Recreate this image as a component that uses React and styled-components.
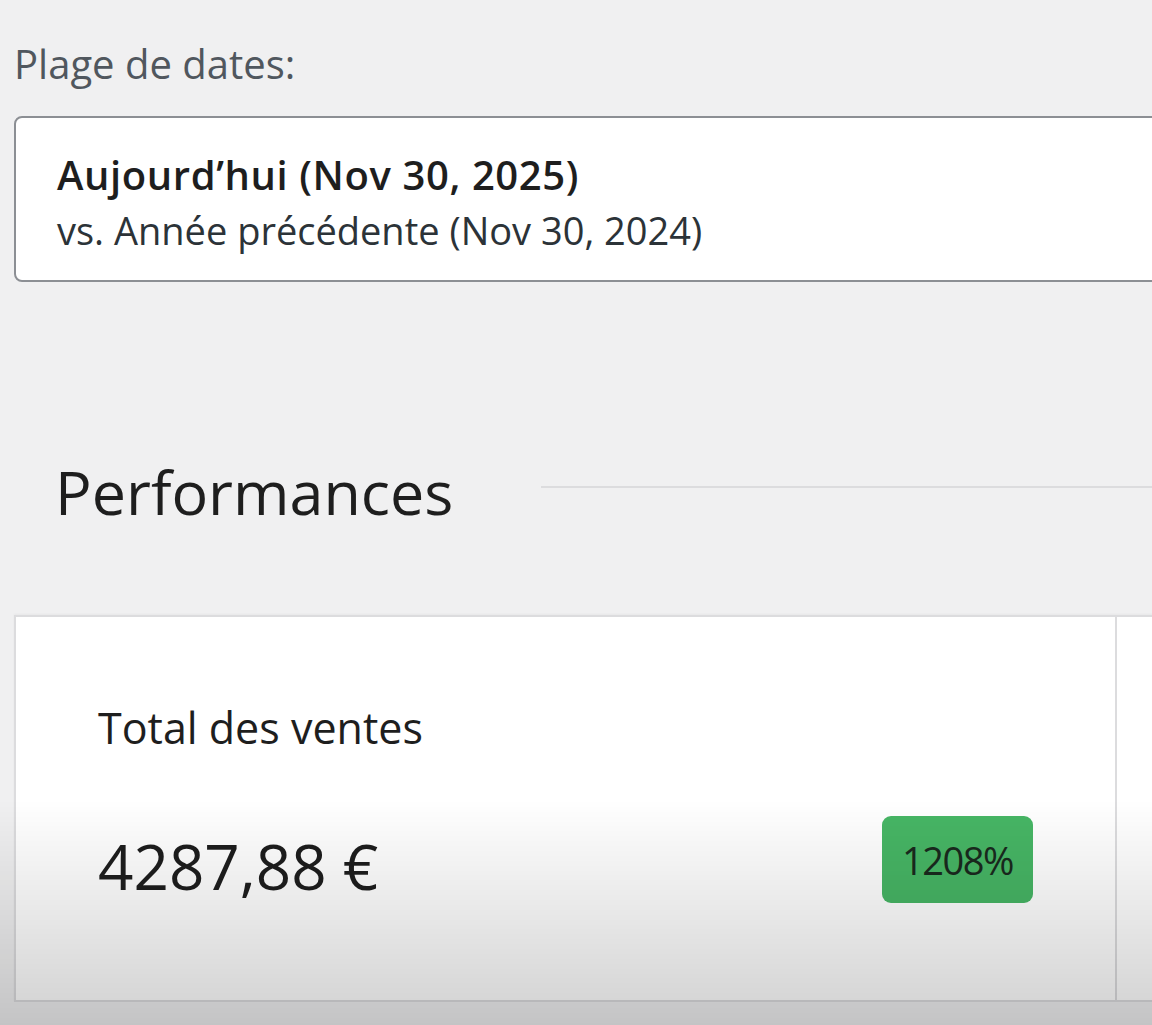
import React from "react";
import styled, { createGlobalStyle } from "styled-components";

const GlobalStyle = createGlobalStyle`
  html, body {
    margin: 0;
    padding: 0;
    background: #f0f0f1;
    overflow: hidden;
  }
  body {
    font-family: "Open Sans", "Noto Sans", sans-serif;
    color: #1e1e1e;
  }
`;

const summary = [
  { id: "sales", label: "Total des ventes", value: "4287,88 €", delta: "1208%" },
];

const App = () => {
  return (
    <>
      <GlobalStyle />
      <Page>
        <Field>
          <FieldLabel>Plage de dates:</FieldLabel>
          <DateButton type="button">
            <DateMain>Aujourd’hui (Nov 30, 2025)</DateMain>
            <DateCompare>vs. Année précédente (Nov 30, 2024)</DateCompare>
          </DateButton>
        </Field>

        <SectionHeader>
          <SectionTitle>Performances</SectionTitle>
          <Rule />
        </SectionHeader>

        <SummaryList>
          {summary.map((item) => (
            <SummaryItem key={item.id}>
              <ItemLabel>{item.label}</ItemLabel>
              <ItemData>
                <ItemValue>{item.value}</ItemValue>
                <Delta>{item.delta}</Delta>
              </ItemData>
            </SummaryItem>
          ))}
          {/* next item starts past the right edge of the window */}
          <SummaryItem />
        </SummaryList>
      </Page>
      <Vignette />
    </>
  );
};

const Page = styled.div`
  width: 2300px;
  height: 100vh;
  padding: 39px 0 0 14px;
  box-sizing: border-box;
`;

const Field = styled.div`
  display: flex;
  flex-direction: column;
  gap: 27px;
`;

const FieldLabel = styled.label`
  font-size: 40px;
  line-height: 50px;
  color: #50575e;
`;

const DateButton = styled.button`
  display: flex;
  flex-direction: column;
  align-items: flex-start;
  width: 1300px;
  height: 166px;
  box-sizing: border-box;
  padding: 29px 41px 0;
  background: #fff;
  border: 2px solid #8c8f94;
  border-radius: 8px;
  font-family: inherit;
  text-align: left;
`;

const DateMain = styled.span`
  font-size: 40px;
  line-height: 56px;
  font-weight: 600;
  letter-spacing: 0.6px;
  color: #1e1e1e;
`;

const DateCompare = styled.span`
  font-size: 38px;
  line-height: 55px;
  color: #2c3338;
`;

const SectionHeader = styled.div`
  display: flex;
  align-items: center;
  gap: 88px;
  margin-top: 174px;
  padding-left: 41px;
  width: 1200px;
`;

const SectionTitle = styled.h2`
  margin: 0;
  font-size: 61px;
  line-height: 72px;
  font-weight: 400;
  color: #1e1e1e;
`;

const Rule = styled.div`
  flex: 1;
  height: 2px;
  margin-bottom: 10px;
  background: #dcdcde;
`;

const SummaryList = styled.div`
  display: grid;
  grid-template-columns: repeat(2, 1101px);
  margin-top: 87px;
  background: #fff;
  border: 2px solid #dcdcde;
  border-right: none;
  box-shadow: 0 -1px 2px rgba(0, 0, 0, 0.04);
`;

const SummaryItem = styled.div`
  display: flex;
  flex-direction: column;
  gap: 72px;
  padding: 83px 82px 97px;
  border-right: 2px solid #dcdcde;
`;

const ItemLabel = styled.div`
  font-size: 43px;
  line-height: 56px;
  color: #1e1e1e;
`;

const ItemData = styled.div`
  display: flex;
  align-items: center;
  justify-content: space-between;
`;

const ItemValue = styled.div`
  font-size: 62px;
  line-height: 72px;
  color: #1e1e1e;
`;

const Delta = styled.div`
  display: flex;
  align-items: center;
  justify-content: center;
  width: 151px;
  height: 87px;
  margin-top: -12px;
  box-sizing: border-box;
  border-radius: 9px;
  background: #47b665;
  font-size: 38px;
  color: #1a2a1e;
  letter-spacing: -1.5px;
`;

const Vignette = styled.div`
  position: fixed;
  inset: 0;
  pointer-events: none;
  background: linear-gradient(
    to bottom,
    rgba(0, 0, 0, 0) 78%,
    rgba(0, 0, 0, 0.18) 100%
  );
`;

export default App;
